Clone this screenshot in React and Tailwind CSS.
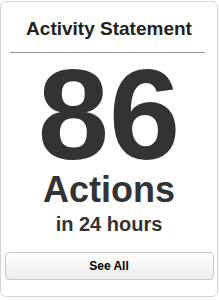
export default function App() {
  return (
    <div className="w-[219px] h-[300px] bg-white pt-px font-['Liberation_Sans',Arial,sans-serif]">
      <div className="w-[218px] h-[296px] border border-[#d4d4d4] rounded-md flex flex-col items-center">
        {/* header */}
        <h2 className="mt-[16px] text-[19px] leading-[22px] font-bold text-[#222]">Activity Statement</h2>
        <div className="mt-[12px] w-[195px] h-px bg-[#999] self-start ml-[9px]" />

        {/* big count */}
        <div className="mt-[12px] text-[128px] leading-[100px] font-bold text-[#333]">86</div>
        <div className="mt-[7px] text-[36px] leading-[36px] font-bold text-[#333]">Actions</div>
        <div className="mt-[6px] text-[20px] leading-[20px] font-bold text-[#333]">in 24 hours</div>

        {/* action */}
        <button className="mt-[18px] w-[209px] h-[28px] rounded border border-[#c8c8c8] bg-gradient-to-b from-white to-[#ececec] text-[12px] font-bold text-black">
          See All
        </button>
      </div>
    </div>
  );
}
